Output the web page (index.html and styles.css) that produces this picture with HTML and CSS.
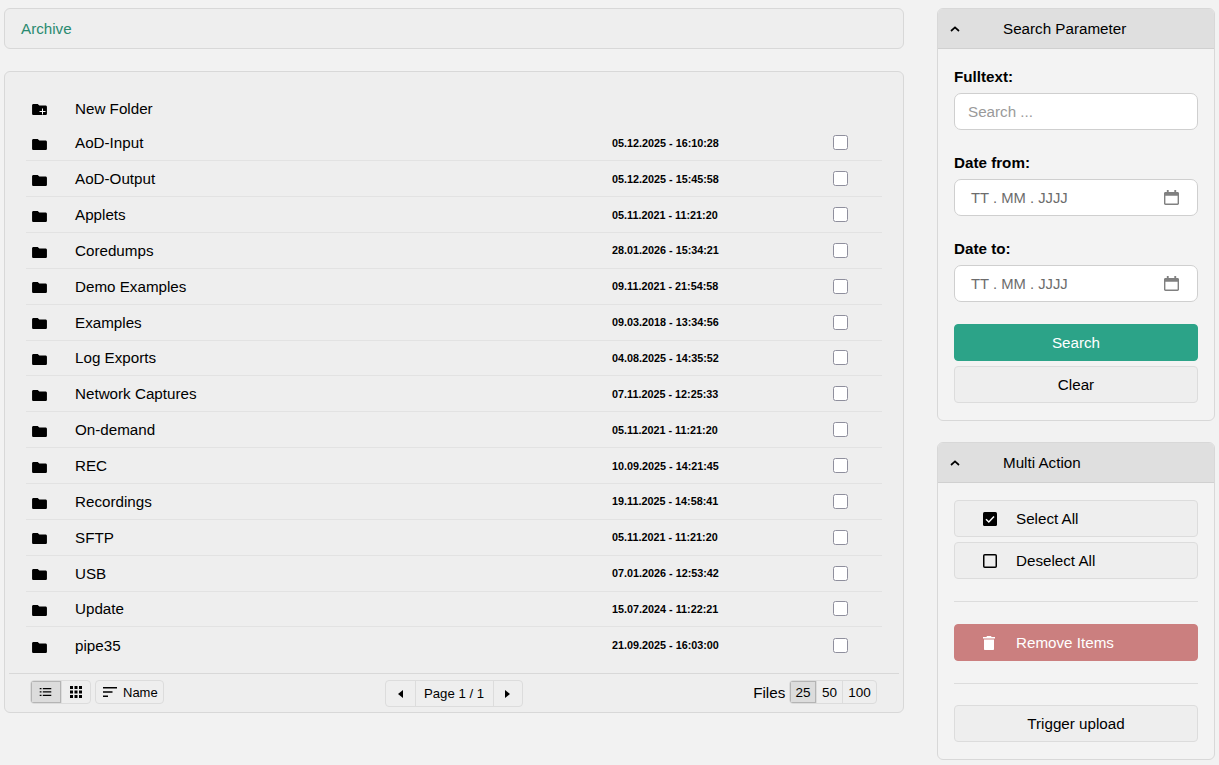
FILE: index.html
```html
<!DOCTYPE html>
<html lang="de">
<head>
<meta charset="utf-8">
<title>Archive</title>
<link rel="stylesheet" href="styles.css">
</head>
<body>
<svg class="defs" width="0" height="0" aria-hidden="true">
  <symbol id="folder" viewBox="0 0 16 14"><path d="M1.500 1h4.600l1.700 1.700h6.700c.8 0 1.500.7 1.500 1.500v7.300c0 .8-.7 1.500-1.500 1.500h-13C.7 13 0 12.300 0 11.500V2.500C0 1.700.7 1 1.500 1z"/></symbol>
  <symbol id="chev" viewBox="0 0 10 6"><path d="M1 5l4-3.600L9 5" fill="none" stroke="#000" stroke-width="1.700"/></symbol>
  <symbol id="cal" viewBox="0 0 16 16"><path fill="#808080" d="M3 0h2v2h6V0h2v2h1.500c.8 0 1.500.7 1.500 1.500v11c0 .8-.7 1.500-1.500 1.500h-13C.7 16 0 15.300 0 14.500v-11C0 2.700.7 2 1.500 2H3zM1.500 6v8.500h13V6z"/></symbol>
</svg>
<div class="page">
  <main class="main">
    <nav class="card crumb"><a class="crumb-link">Archive</a></nav>
    <section class="card browser">
      <div class="list">
        <div class="row row-new">
          <svg class="ico-folder" width="15" height="13"><use href="#folder"/></svg>
          <svg class="plus" width="7" height="7" viewBox="0 0 7 7"><path d="M3 .5h1v2.500h2.500v1H4v2.500H3V4H.5V3H3z" fill="#fff"/></svg>
          <span class="name">New Folder</span>
        </div>
        <div class="row"><svg class="ico-folder" width="15" height="13"><use href="#folder"/></svg><span class="name">AoD-Input</span><span class="date">05.12.2025 - 16:10:28</span><span class="check"></span></div>
        <div class="row"><svg class="ico-folder" width="15" height="13"><use href="#folder"/></svg><span class="name">AoD-Output</span><span class="date">05.12.2025 - 15:45:58</span><span class="check"></span></div>
        <div class="row"><svg class="ico-folder" width="15" height="13"><use href="#folder"/></svg><span class="name">Applets</span><span class="date">05.11.2021 - 11:21:20</span><span class="check"></span></div>
        <div class="row"><svg class="ico-folder" width="15" height="13"><use href="#folder"/></svg><span class="name">Coredumps</span><span class="date">28.01.2026 - 15:34:21</span><span class="check"></span></div>
        <div class="row"><svg class="ico-folder" width="15" height="13"><use href="#folder"/></svg><span class="name">Demo Examples</span><span class="date">09.11.2021 - 21:54:58</span><span class="check"></span></div>
        <div class="row"><svg class="ico-folder" width="15" height="13"><use href="#folder"/></svg><span class="name">Examples</span><span class="date">09.03.2018 - 13:34:56</span><span class="check"></span></div>
        <div class="row"><svg class="ico-folder" width="15" height="13"><use href="#folder"/></svg><span class="name">Log Exports</span><span class="date">04.08.2025 - 14:35:52</span><span class="check"></span></div>
        <div class="row"><svg class="ico-folder" width="15" height="13"><use href="#folder"/></svg><span class="name">Network Captures</span><span class="date">07.11.2025 - 12:25:33</span><span class="check"></span></div>
        <div class="row"><svg class="ico-folder" width="15" height="13"><use href="#folder"/></svg><span class="name">On-demand</span><span class="date">05.11.2021 - 11:21:20</span><span class="check"></span></div>
        <div class="row"><svg class="ico-folder" width="15" height="13"><use href="#folder"/></svg><span class="name">REC</span><span class="date">10.09.2025 - 14:21:45</span><span class="check"></span></div>
        <div class="row"><svg class="ico-folder" width="15" height="13"><use href="#folder"/></svg><span class="name">Recordings</span><span class="date">19.11.2025 - 14:58:41</span><span class="check"></span></div>
        <div class="row"><svg class="ico-folder" width="15" height="13"><use href="#folder"/></svg><span class="name">SFTP</span><span class="date">05.11.2021 - 11:21:20</span><span class="check"></span></div>
        <div class="row"><svg class="ico-folder" width="15" height="13"><use href="#folder"/></svg><span class="name">USB</span><span class="date">07.01.2026 - 12:53:42</span><span class="check"></span></div>
        <div class="row"><svg class="ico-folder" width="15" height="13"><use href="#folder"/></svg><span class="name">Update</span><span class="date">15.07.2024 - 11:22:21</span><span class="check"></span></div>
        <div class="row row-last"><svg class="ico-folder" width="15" height="13"><use href="#folder"/></svg><span class="name">pipe35</span><span class="date">21.09.2025 - 16:03:00</span><span class="check"></span></div>
      </div>
      <footer class="foot">
        <div class="foot-left">
          <div class="group">
            <span class="seg seg-view seg-on"><svg width="13" height="8" viewBox="0 0 13 9"><path d="M0 0h2v1.500H0zM3.500 0H13v1.500H3.500zM0 3.700h2v1.500H0zM3.500 3.700H13v1.500H3.500zM0 7.500h2V9H0zM3.500 7.500H13V9H3.500z"/></svg></span>
            <span class="seg seg-view"><svg width="12" height="12" viewBox="0 0 12 12"><path d="M0 0h3v3H0zM4.500 0h3v3h-3zM9 0h3v3H9zM0 4.500h3v3H0zM4.500 4.500h3v3h-3zM9 4.500h3v3H9zM0 9h3v3H0zM4.500 9h3v3h-3zM9 9h3v3H9z"/></svg></span>
          </div>
          <div class="group sort">
            <svg width="14" height="10" viewBox="0 0 14 10"><path d="M0 0h14v1.500H0zM0 4.200h9.500v1.500H0zM0 8.500h5V10H0z"/></svg>
            <span>Name</span>
          </div>
        </div>
        <div class="group pager">
          <span class="seg seg-arrow"><svg width="5" height="8" viewBox="0 0 5 8"><path d="M5 0v8L0 4z"/></svg></span>
          <span class="seg seg-page">Page 1 / 1</span>
          <span class="seg seg-arrow"><svg width="5" height="8" viewBox="0 0 5 8"><path d="M0 0v8l5-4z"/></svg></span>
        </div>
        <div class="foot-right">
          <span class="files">Files</span>
          <div class="group">
            <span class="seg seg-num seg-on">25</span>
            <span class="seg seg-num">50</span>
            <span class="seg seg-num">100</span>
          </div>
        </div>
      </footer>
    </section>
  </main>
  <aside class="side">
    <section class="card panel">
      <header class="panel-head"><svg width="10" height="6"><use href="#chev"/></svg><span>Search Parameter</span></header>
      <div class="panel-body panel-search">
        <label class="label">Fulltext:</label>
        <div class="input"><span class="placeholder">Search ...</span></div>
        <label class="label label-next">Date from:</label>
        <div class="input input-date"><span class="date-text">TT . MM . JJJJ</span><svg width="15" height="15"><use href="#cal"/></svg></div>
        <label class="label label-next">Date to:</label>
        <div class="input input-date"><span class="date-text">TT . MM . JJJJ</span><svg width="15" height="15"><use href="#cal"/></svg></div>
        <button class="btn btn-primary btn-search">Search</button>
        <button class="btn btn-clear">Clear</button>
      </div>
    </section>
    <section class="card panel">
      <header class="panel-head"><svg width="10" height="6"><use href="#chev"/></svg><span>Multi Action</span></header>
      <div class="panel-body panel-actions">
        <button class="btn btn-icon"><svg width="14" height="14" viewBox="0 0 14 14"><rect width="14" height="14" rx="1.500"/><path d="M3 7.300l2.800 2.700L11 4.500" fill="none" stroke="#fff" stroke-width="1.500"/></svg><span>Select All</span></button>
        <button class="btn btn-icon btn-clear"><svg width="14" height="14" viewBox="0 0 14 14"><rect x=".75" y=".75" width="12.500" height="12.500" rx="1" fill="none" stroke="#000" stroke-width="1.500"/></svg><span>Deselect All</span></button>
        <hr class="rule">
        <button class="btn btn-icon btn-danger"><svg width="12" height="14" viewBox="0 0 12 14"><path fill="#fff" d="M4 0h4l.6 1H12v1.500H0V1h3.400zM1 3.500h10V13c0 .6-.4 1-1 1H2c-.6 0-1-.4-1-1z"/></svg><span>Remove Items</span></button>
        <hr class="rule rule-last">
        <button class="btn">Trigger upload</button>
      </div>
    </section>
  </aside>
</div>
</body>
</html>
```
FILE: styles.css
```css
* { box-sizing: border-box; }
html, body { margin: 0; height: 100%; }
body {
  background: #f2f2f2;
  color: #000;
  font-family: "Liberation Sans", Arial, sans-serif;
  font-size: 15.2px;
  overflow: hidden;
}
.defs { position: absolute; }
.page {
  display: grid;
  grid-template-columns: 900px 278px;
  column-gap: 33px;
  padding: 8px 4px 0;
  align-items: start;
}
.card {
  background: #eeeeee;
  border: 1px solid #d8d8d8;
  border-radius: 6px;
}
.main { display: flex; flex-direction: column; gap: 22px; }
.crumb {
  height: 41px;
  padding: 0 16px;
  display: flex;
  align-items: center;
}
.crumb-link { color: #2a8a70; }
.browser { height: 642px; padding: 19px 4px 0; display: flex; flex-direction: column; }
.list { padding: 0 17px; flex: 0 0 582px; }
.row {
  height: 35.86px;
  display: flex;
  align-items: center;
  border-bottom: 1px solid #e2e2e2;
  padding-left: 6px;
  position: relative;
}
.row-new { height: 34.4px; border-bottom: 0; }
.row-last { border-bottom: 0; }
.ico-folder { flex: none; margin-top: 3.400px; }
.plus { position: absolute; left: 13px; top: 17px; }
.name { margin-left: 28px; width: 537px; flex: none; }
.date { font-size: 10.800px; font-weight: 700; width: 221px; flex: none; }
.check {
  width: 15px;
  height: 15px;
  background: #fff;
  border: 1px solid #8f8f9d;
  border-radius: 2.500px;
  flex: none;
}
.foot {
  border-top: 1px solid #d8d8d8;
  height: 39px;
  padding: 6px 22px 0 21px;
  display: grid;
  grid-template-columns: 1fr auto 1fr;
  align-items: start;
}
.foot-left { display: flex; gap: 4px; }
.group {
  display: inline-flex;
  align-items: stretch;
  height: 24px;
  border: 1px solid #dcdcdc;
  border-radius: 4px;
  overflow: hidden;
  font-size: 12px;
}
.seg { display: flex; align-items: center; justify-content: center; }
.seg + .seg { border-left: 1px solid #dcdcdc; }
.seg-on {
  background: #dcdcdc;
  box-shadow: inset 0 0 0 1px #b4b4b4;
}
.seg-view { width: 29.500px; }
.sort { gap: 6px; align-items: center; padding: 0 5px 0 7px; font-size: 13px; }
.pager { height: 27px; font-size: 13.200px; justify-self: center; }
.seg-arrow { width: 29px; }
.seg-page { width: 78px; }
.foot-right { display: flex; justify-content: flex-end; align-items: center; gap: 4px; }
.foot-right .group { font-size: 13.500px; }
.seg-num { padding: 0 5.200px; }
.side { display: flex; flex-direction: column; gap: 21px; }
.panel { background: #f3f3f3; overflow: hidden; }
.panel-head {
  height: 40px;
  background: #dfdfdf;
  border-bottom: 1px solid #d0d0d0;
  display: flex;
  align-items: center;
  padding-left: 12px;
}
.panel-head span { margin-left: 43px; }
.panel-body { padding: 16px; display: flex; flex-direction: column; }
.panel-search { padding-bottom: 17px; }
.label { font-weight: 700; line-height: 24px; height: 24px; margin-bottom: 4px; }
.label-next { margin-top: 21px; }
.input {
  height: 37px;
  background: #fff;
  border: 1px solid #cfcfcf;
  border-radius: 7px;
  display: flex;
  align-items: center;
  padding: 0 13px;
}
.placeholder { color: #9a9a9a; }
.input-date { justify-content: space-between; padding: 0 18px 0 16px; }
.date-text { color: #6c6c6c; font-size: 14.800px; }
.btn {
  height: 37px;
  width: 100%;
  background: #eeeeee;
  border: 1px solid #dcdcdc;
  border-radius: 4px;
  font: inherit;
  color: #000;
  padding: 0;
  display: flex;
  align-items: center;
  justify-content: center;
}
.btn-primary { background: #2ca388; border-color: #2ca388; color: #fff; }
.btn-search { margin-top: 22px; }
.btn-clear { margin-top: 5px; }
.btn-icon { justify-content: flex-start; padding-left: 28px; }
.btn-icon span { margin-left: 19px; }
.btn-danger { background: #cb7f7f; border-color: #cb7f7f; color: #fff; }
.btn-danger span { margin-left: 21px; }
.panel-actions { padding-top: 17px; padding-bottom: 17px; }
.rule { width: 100%; border: 0; border-top: 1px solid #dcdcdc; margin: 22px 0; height: 0; }
.rule-last { margin-bottom: 21px; }
```
